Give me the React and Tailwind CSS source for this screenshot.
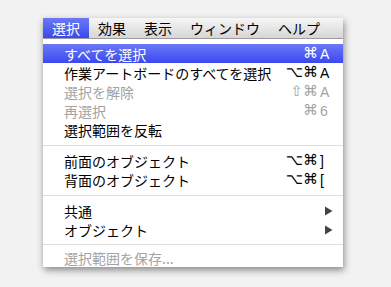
import { Fragment } from 'react'

const sections = [
  [
    { label: 'すべてを選択', mods: '⌘', key: 'A', active: true },
    { label: '作業アートボードのすべてを選択', mods: '⌥⌘', key: 'A' },
    { label: '選択を解除', mods: '⇧⌘', key: 'A', disabled: true },
    { label: '再選択', mods: '⌘', key: '6', disabled: true },
    { label: '選択範囲を反転' }
  ],
  [
    { label: '前面のオブジェクト', mods: '⌥⌘', key: ']' },
    { label: '背面のオブジェクト', mods: '⌥⌘', key: '[' }
  ],
  [
    { label: '共通', submenu: true },
    { label: 'オブジェクト', submenu: true }
  ],
  [{ label: '選択範囲を保存...', disabled: true }]
]

const menus = ['選択', '効果', '表示', 'ウィンドウ', 'ヘルプ']

function MenuRow({ item }) {
  let rowClass = 'text-black'
  if (item.active) rowClass = 'bg-gradient-to-b from-[#6c78f6] to-[#3b47ee] text-white'
  else if (item.disabled) rowClass = 'text-[#a3a3a3]'

  return (
    <div className={`flex items-center h-[19px] pl-[21px] pr-[14px] ${rowClass}`}>
      <span className="flex-1 leading-none">{item.label}</span>
      {item.key && (
        <span className="flex items-center leading-none font-['DejaVu_Sans',sans-serif]">
          <span className="text-[15px]">{item.mods}</span>
          <span className="w-[9px] ml-[2px] font-['Liberation_Sans',sans-serif] text-[14px]">{item.key}</span>
        </span>
      )}
      {item.submenu && (
        <svg width="9" height="10" viewBox="0 0 9 10" className="-mr-[4px]">
          <path d="M1 0.5 L8.5 5 L1 9.5 Z" fill="#444" />
        </svg>
      )}
    </div>
  )
}

export default function App() {
  return (
    <div className="w-[391px] h-[287px] bg-[#f2f2f2] pt-[18px] pl-[43px] font-['Noto_Sans_CJK_JP',sans-serif]">
      <div className="w-[300px] h-[249px] bg-white overflow-hidden shadow-[1px_3px_7px_rgba(0,0,0,0.45)]">
        {/* menu bar */}
        <div className="flex h-[21px] bg-gradient-to-b from-[#f6f6f6] to-[#d6d6d6] border-b border-[#9c9c9c] text-[14px]">
          {menus.map((m, i) => (
            <div
              key={m}
              className={`flex items-center px-[9px] leading-none ${
                i === 0 ? 'bg-gradient-to-b from-[#6c78f6] to-[#3b47ee] text-white' : 'text-black'
              }`}
            >
              {m}
            </div>
          ))}
        </div>

        {/* dropdown */}
        <div className="pt-[5px] text-[14px]">
          {sections.map((section, si) => (
            <Fragment key={si}>
              {si > 0 && (
                <div
                  className={`h-px bg-[#dedede] ${
                    si === sections.length - 1 ? 'mt-[5px] mb-[3px]' : 'mt-[6px] mb-[5px]'
                  }`}
                />
              )}
              {section.map((item) => (
                <MenuRow key={item.label} item={item} />
              ))}
            </Fragment>
          ))}
        </div>
      </div>
    </div>
  )
}
